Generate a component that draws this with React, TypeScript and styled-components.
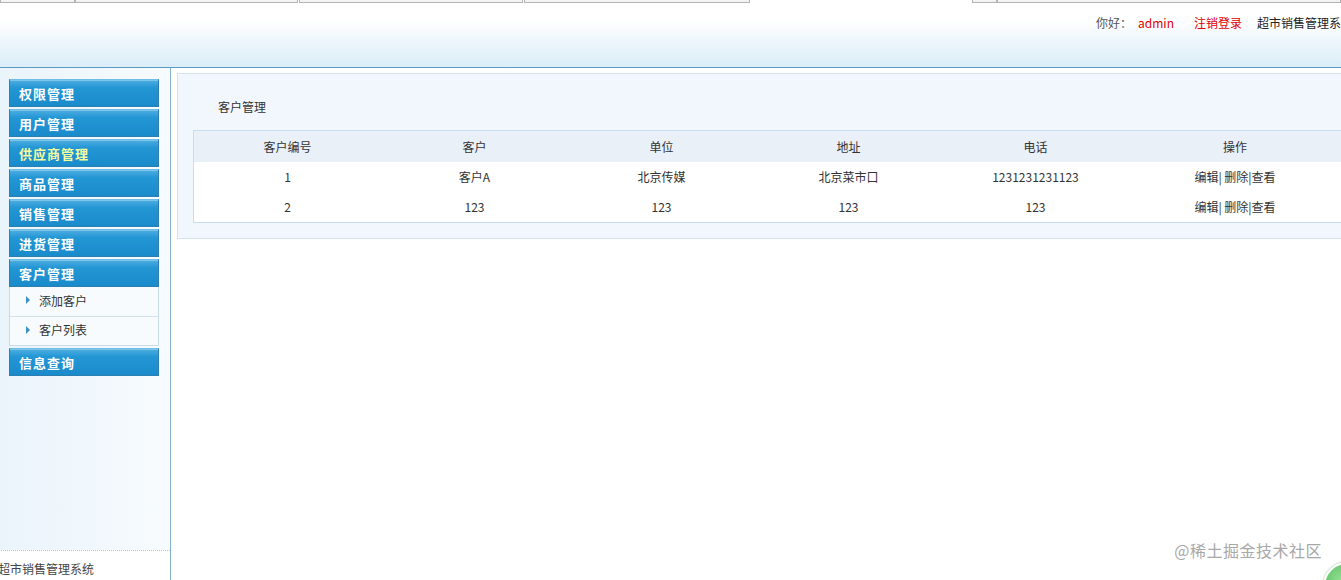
import styled, { createGlobalStyle } from "styled-components";

const GlobalStyle = createGlobalStyle`
  html, body {
    margin: 0;
    padding: 0;
    background: #ffffff;
    font-family: "Noto Sans CJK SC", "Noto Sans", sans-serif;
    font-size: 12px;
    color: #333;
    overflow: hidden;
  }
`;

const Page = styled.div`
  position: relative;
  width: 1341px;
  height: 580px;
  overflow: hidden;
  display: flex;
  flex-direction: column;
`;

const Header = styled.header`
  height: 67px;
  border-bottom: 1px solid #5b9bc2;
  background: linear-gradient(#ffffff 0%, #ffffff 30%, #e9f4fb 70%, #dbedf8 100%);
  display: flex;
  flex-direction: column;
`;

const TabStrip = styled.div`
  display: flex;
  height: 3px;
`;

const Tab = styled.div<{ $w: number; $gap?: number }>`
  width: ${(p) => p.$w}px;
  margin-left: ${(p) => p.$gap ?? 0}px;
  box-sizing: border-box;
  border: 1px solid #b4b4b4;
  border-top: none;
  background: #f3f3f3;
`;

const UserBar = styled.div`
  display: flex;
  justify-content: flex-end;
  align-items: center;
  height: 38px;
  margin-right: -12px;
  white-space: nowrap;
  font-size: 12px;
`;

const Greeting = styled.span`
  color: #555;
`;

const RedText = styled.span<{ $ml: number }>`
  color: #e00000;
  margin-left: ${(p) => p.$ml}px;
`;

const SysName = styled.span`
  color: #222;
  margin-left: 15px;
`;

const Body = styled.div`
  flex: 1;
  display: flex;
  min-height: 0;
`;

const Sidebar = styled.aside`
  width: 171px;
  flex-shrink: 0;
  border-right: 1px solid #86b3cc;
  background: linear-gradient(90deg, #eaf4fb 0%, #f7fbfe 100%);
  display: flex;
  flex-direction: column;
  padding-top: 11px;
  box-sizing: border-box;
`;

const MenuList = styled.div`
  display: flex;
  flex-direction: column;
  gap: 2px;
  margin-left: 9px;
  width: 150px;
`;

const MenuButton = styled.div<{ $active?: boolean }>`
  height: 28px;
  box-sizing: border-box;
  border: 1px solid #2b7fb1;
  border-top-color: #6fbde6;
  background: linear-gradient(#4eaee0 0%, #2396d4 30%, #1a8acb 100%);
  box-shadow: inset 0 1px 0 #7cc6ec;
  color: ${(p) => (p.$active ? "#f4ff9c" : "#ffffff")};
  font-weight: bold;
  font-size: 13px;
  letter-spacing: 1px;
  padding-left: 9px;
  display: flex;
  align-items: center;
`;

const SubMenu = styled.div`
  display: flex;
  flex-direction: column;
  margin-top: -2px;
  border: 1px solid #c9dbe7;
  border-top: none;
  background: #f8fbfd;
`;

const SubItem = styled.div`
  height: 29px;
  box-sizing: border-box;
  display: flex;
  align-items: center;
  padding: 0 0 3px 16px;
  gap: 9px;
  color: #333;
  font-size: 12px;
  & + & {
    border-top: 1px solid #d3e1ea;
  }
`;

const Arrow = styled.span`
  width: 0;
  height: 0;
  border-top: 4px solid transparent;
  border-bottom: 4px solid transparent;
  border-left: 4px solid #3b90c8;
`;

const SideFooter = styled.div`
  margin-top: auto;
  height: 30px;
  border-top: 1px dotted #b9c4cc;
  background: #ffffff;
  display: flex;
  align-items: center;
  padding-top: 6px;
  box-sizing: border-box;
  margin-left: -2px;
  font-size: 12px;
  color: #444;
`;

const Main = styled.main`
  flex: 1;
  padding: 5px 0 0 6px;
  min-width: 0;
`;

const Panel = styled.section`
  margin-right: -4px;
  border: 1px solid #d3e2ee;
  background: #f2f7fd;
  padding: 0 0 15px 15px;
`;

const PanelTitle = styled.div`
  padding: 25px 0 0 25px;
  height: 56px;
  box-sizing: border-box;
  line-height: 16px;
  font-size: 12px;
  color: #333;
`;

const Table = styled.div`
  border: 1px solid #c7dced;
  background: #ffffff;
  margin-right: 2px;
`;

const Row = styled.div<{ $head?: boolean }>`
  display: grid;
  grid-template-columns: repeat(5, 187px) 1fr;
  height: ${(p) => (p.$head ? 31 : 30)}px;
  background: ${(p) => (p.$head ? "#e9f0f8" : "#ffffff")};
`;

const Cell = styled.div`
  display: flex;
  align-items: center;
  justify-content: center;
  padding-bottom: 1px;
  font-size: 12px;
  color: #333;
`;

const Watermark = styled.div`
  position: absolute;
  right: 19px;
  bottom: 18px;
  font-size: 16px;
  color: #a8a8a8;
  letter-spacing: 0.5px;
`;

const Badge = styled.div`
  position: absolute;
  right: -30px;
  bottom: -30px;
  width: 44px;
  height: 44px;
  border-radius: 50%;
  background: radial-gradient(circle at 35% 35%, #8fe08f, #2f9e3f);
  border: 2px solid #ffffff;
  box-shadow: 0 0 2px #6a6;
`;

const menus = ["权限管理", "用户管理", "供应商管理", "商品管理", "销售管理", "进货管理"];
const heads = ["客户编号", "客户", "单位", "地址", "电话", "操作"];
const rows = [
  ["1", "客户A", "北京传媒", "北京菜市口", "1231231231123"],
  ["2", "123", "123", "123", "123"],
];

export default function App() {
  return (
    <Page>
      <GlobalStyle />
      <Header>
        <TabStrip>
          <Tab $w={75} />
          <Tab $w={224} />
          <Tab $w={224} $gap={1} />
          <Tab $w={226} $gap={1} />
          <Tab $w={25} $gap={222} />
          <Tab $w={345} />
        </TabStrip>
        <UserBar>
          <Greeting>你好：</Greeting>
          <RedText $ml={6}>admin</RedText>
          <RedText $ml={20}>注销登录</RedText>
          <SysName>超市销售管理系统</SysName>
        </UserBar>
      </Header>
      <Body>
        <Sidebar>
          <MenuList>
            {menus.map((m) => (
              <MenuButton key={m} $active={m === "供应商管理"}>
                {m}
              </MenuButton>
            ))}
            <MenuButton>客户管理</MenuButton>
            <SubMenu>
              <SubItem>
                <Arrow />
                添加客户
              </SubItem>
              <SubItem>
                <Arrow />
                客户列表
              </SubItem>
            </SubMenu>
            <MenuButton>信息查询</MenuButton>
          </MenuList>
          <SideFooter>超市销售管理系统</SideFooter>
        </Sidebar>
        <Main>
          <Panel>
            <PanelTitle>客户管理</PanelTitle>
            <Table>
              <Row $head>
                {heads.map((h) => (
                  <Cell key={h}>{h}</Cell>
                ))}
              </Row>
              {rows.map((r) => (
                <Row key={r[0]}>
                  {r.map((c, i) => (
                    <Cell key={i}>{c}</Cell>
                  ))}
                  <Cell>编辑| 删除|查看</Cell>
                </Row>
              ))}
            </Table>
          </Panel>
        </Main>
      </Body>
      <Watermark>@稀土掘金技术社区</Watermark>
      <Badge />
    </Page>
  );
}
